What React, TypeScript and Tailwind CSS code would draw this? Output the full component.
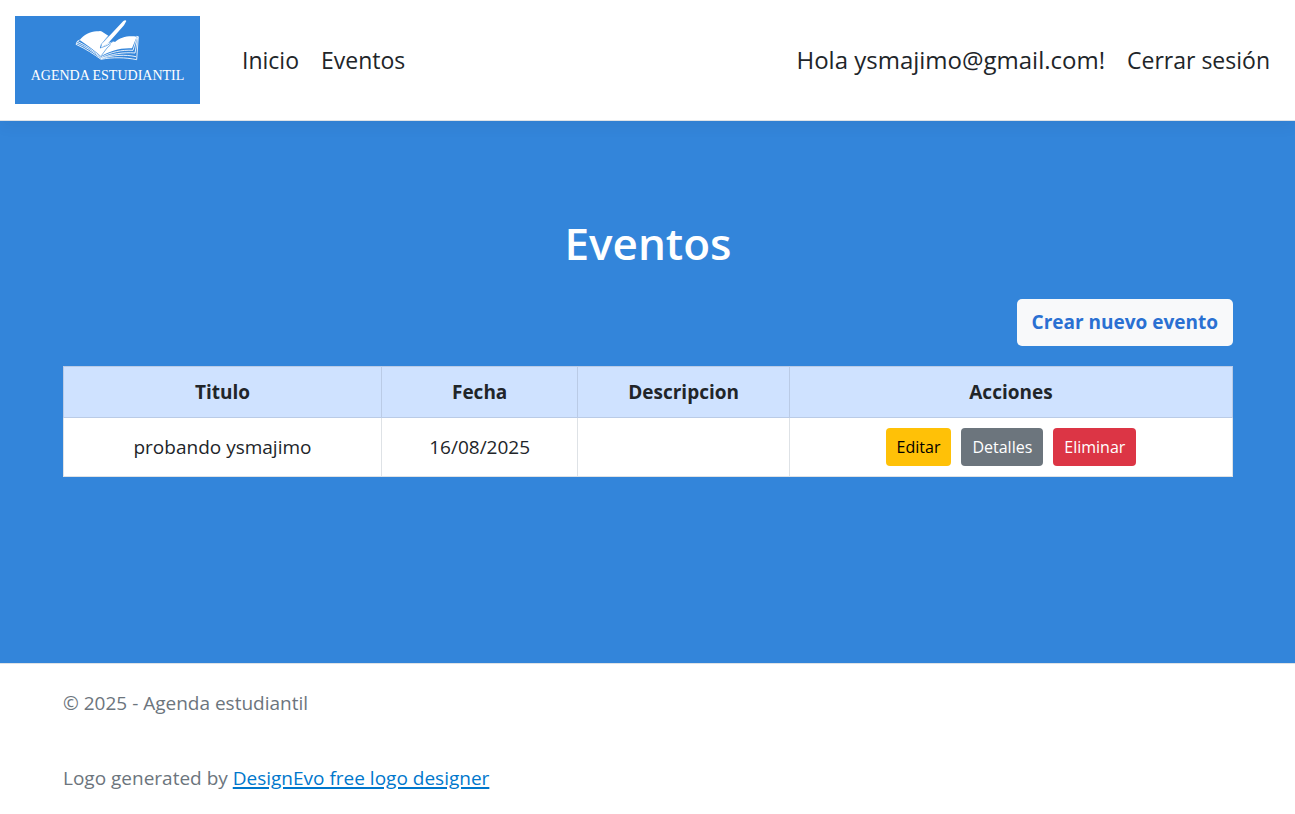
type Evento = { titulo: string; fecha: string; descripcion: string };

const eventos: Evento[] = [{ titulo: "probando ysmajimo", fecha: "16/08/2025", descripcion: "" }];

function Logo() {
  return (
    <a
      href="#inicio"
      aria-label="Agenda estudiantil"
      className="flex h-22 w-[185px] flex-col items-center bg-[#3385da] pt-1 text-white"
    >
      <svg viewBox="225 60 198 126" className="h-[42px] w-[66px]" aria-hidden="true">
        <path
          fill="#fff"
          d="M239 120C252 103 276 91 296 94Q303 91 311 98L326 108L303 136L300 145L327 128L340 124L345 126C360 112 385 106 410 110L396 145C360 143 330 153 303 169C284 151 260 134 239 120Z"
        />
        <path
          fill="none"
          stroke="#fff"
          strokeWidth="2.6"
          strokeLinejoin="round"
          d="M239 120L232 124C258 136 282 153 303 172C333 156 366 149 399 151L411 111M232 124L230 129C257 140 283 157 303 175C335 162 370 156 405 159L413 112M230 129L228 133C257 146 282 163 303 178C340 171 375 172 410 179L415 110L409 109M303 176C340 165 375 163 408 170"
        />
        <path
          fill="none"
          stroke="#3385da"
          strokeWidth="2"
          d="M301 144L322 136L342 122M301 144L304 133L328 104M304 167L321 144L332 134"
        />
        <path fill="#fff" d="M303 143L306 131L370 63Q377 58 379 63L372 76L323 131L311 138Z" />
      </svg>
      <span className="font-['Liberation_Serif',serif] text-[14px] leading-7 whitespace-nowrap">
        AGENDA ESTUDIANTIL
      </span>
    </a>
  );
}

export default function App() {
  return (
    <div className="flex min-h-screen flex-col bg-white font-['Open_Sans',sans-serif] text-[19px] leading-[30px] text-[#212529]">
      <header className="z-10 border-b border-[#dee2e6] bg-white px-[15px] py-4 shadow-[0_5px_15px_rgba(0,0,0,0.05)]">
        <nav className="flex flex-wrap items-center gap-x-8 text-[23px] leading-9">
          <Logo />
          <div className="flex flex-1 flex-wrap items-center justify-between">
            <ul className="flex gap-x-[22px] px-[10px]">
              <li><a href="#inicio">Inicio</a></li>
              <li><a href="#eventos">Eventos</a></li>
            </ul>
            <ul className="flex flex-wrap gap-x-[22px] px-[10px]">
              <li className="text-[24px]"><a href="#perfil">Hola ysmajimo@gmail.com!</a></li>
              <li><button type="button">Cerrar sesión</button></li>
            </ul>
          </div>
        </nav>
      </header>

      <main className="flex-1 bg-[#3385da] pt-[92px] pr-[62px] pb-12 pl-[63px]">
        <h1 className="text-center text-[44px] leading-[60px] font-semibold text-white">Eventos</h1>
        <div className="mt-[26px] flex justify-end">
          <a href="#crear" className="rounded-[5px] bg-[#f8f9fa] px-[15px] py-2 leading-[31px] font-bold text-[#2a70d2]">
            Crear nuevo evento
          </a>
        </div>
        <table className="mt-5 w-full table-fixed border-collapse bg-white text-center">
          <colgroup>
            <col className="w-[27.2%]" />
            <col className="w-[16.8%]" />
            <col className="w-[18.1%]" />
            <col className="w-[37.9%]" />
          </colgroup>
          <thead className="bg-[#cfe2ff]">
            <tr>
              {["Titulo", "Fecha", "Descripcion", "Acciones"].map((h) => (
                <th key={h} scope="col" className="border border-[#bacbe6] p-[10px] font-bold">{h}</th>
              ))}
            </tr>
          </thead>
          <tbody>
            {eventos.map((e) => (
              <tr key={e.titulo}>
                <td className="border border-[#dee2e6] p-[10px]">{e.titulo}</td>
                <td className="border border-[#dee2e6] p-[10px]">{e.fecha}</td>
                <td className="border border-[#dee2e6] p-[10px]">{e.descripcion}</td>
                <td className="border border-[#dee2e6] p-[10px]">
                  <div className="flex justify-center gap-[10px] text-[16px] leading-[38px]">
                    <a href="#editar" className="rounded bg-[#ffc107] px-[11px] text-black">Editar</a>
                    <a href="#detalles" className="rounded bg-[#6c757d] px-[11px] text-white">Detalles</a>
                    <a href="#eliminar" className="rounded bg-[#dc3545] px-[11px] text-white">Eliminar</a>
                  </div>
                </td>
              </tr>
            ))}
          </tbody>
        </table>
      </main>

      <footer className="border-t border-[#dee2e6] px-[63px] pt-6 pb-[21px] text-[#6c757d]">
        <p>© 2025 - Agenda estudiantil</p>
        <p className="mt-[45px]">
          Logo generated by{" "}
          <a href="#designevo" className="text-[#0077cc] underline decoration-2 underline-offset-2">
            DesignEvo free logo designer
          </a>
        </p>
      </footer>
    </div>
  );
}
